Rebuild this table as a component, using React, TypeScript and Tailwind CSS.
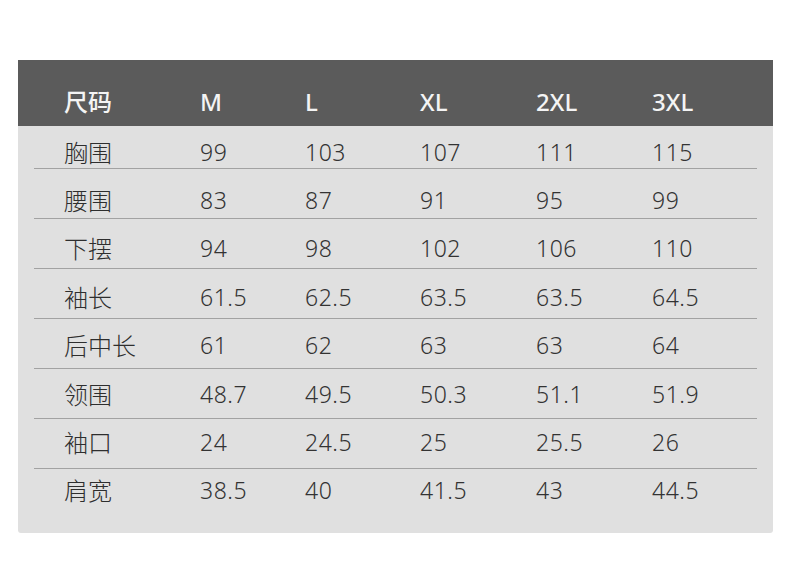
import React from 'react';

const sizes = ['M', 'L', 'XL', '2XL', '3XL'];

const rows: { label: string; values: string[] }[] = [
  { label: '胸围', values: ['99', '103', '107', '111', '115'] },
  { label: '腰围', values: ['83', '87', '91', '95', '99'] },
  { label: '下摆', values: ['94', '98', '102', '106', '110'] },
  { label: '袖长', values: ['61.5', '62.5', '63.5', '63.5', '64.5'] },
  { label: '后中长', values: ['61', '62', '63', '63', '64'] },
  { label: '领围', values: ['48.7', '49.5', '50.3', '51.1', '51.9'] },
  { label: '袖口', values: ['24', '24.5', '25', '25.5', '26'] },
  { label: '肩宽', values: ['38.5', '40', '41.5', '43', '44.5'] },
];

// text sits a little higher in each row further down the table
const rowPad = [
  'h-[43px] pt-[14px] border-b',
  'h-[50px] pt-[19px] border-b',
  'h-[50px] pt-[17px] border-b',
  'h-[50px] pt-[16px] border-b',
  'h-[50px] pt-[14px] border-b',
  'h-[50px] pt-[13px] border-b',
  'h-[50px] pt-[11px] border-b',
  'h-[50px] pt-[9px]',
];

const cols = 'grid grid-cols-[136px_105px_115px_116px_116px_1fr] pl-[30px]';

const App: React.FC = () => {
  return (
    <div className="w-[790px] h-[575px] bg-white pt-[60px] pl-[18px]">
      <div className="w-[755px] h-[473px] bg-[#e0e0e0] rounded-b-[3px] flex flex-col">
        {/* header */}
        <div className="h-[66px] bg-[#5b5b5b] px-[16px] flex items-center">
          <div className={`${cols} w-full items-center pt-[18px] text-[#f4f4f4] text-[24px] font-medium font-['Noto_Sans',_'Noto_Sans_CJK_SC',_sans-serif]`}>
            <span className="leading-none">尺码</span>
            {sizes.map(s => (
              <span key={s} className="leading-none">{s}</span>
            ))}
          </div>
        </div>

        {/* body */}
        <div className="px-[16px] flex flex-col">
          {rows.map((row, i) => (
            <div key={row.label} className={`${cols} ${rowPad[i]} items-start border-[#a2a2a2]`}>
              <span className="text-[24px] leading-none text-[#2e2e2e] font-light font-['Noto_Sans_CJK_SC',_sans-serif]">
                {row.label}
              </span>
              {row.values.map((v, j) => (
                <span
                  key={j}
                  className="text-[23px] leading-[24px] text-[#333333] font-light tracking-[0.5px] font-['Noto_Sans',_sans-serif]"
                >
                  {v}
                </span>
              ))}
            </div>
          ))}
        </div>
      </div>
    </div>
  );
};

export default App;
